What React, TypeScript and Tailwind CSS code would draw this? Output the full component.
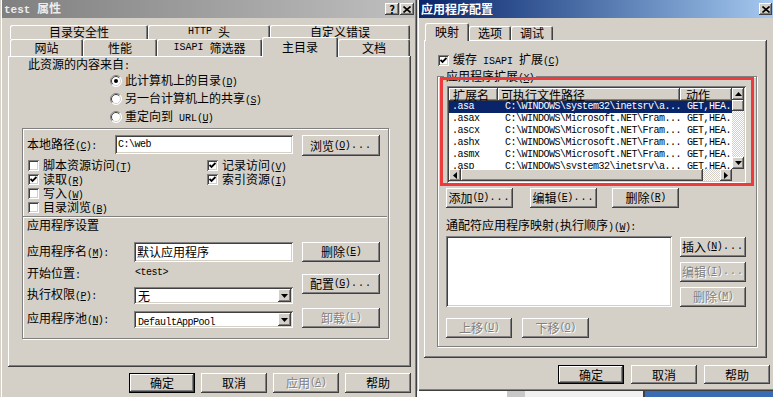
import React from "react";

const RAISED = "shadow-[inset_-1px_-1px_#404040,inset_1px_1px_#ffffff,inset_-2px_-2px_#808080,inset_2px_2px_#d4d0c8]";
const SUNKEN = "shadow-[inset_1px_1px_#808080,inset_-1px_-1px_#ffffff,inset_2px_2px_#404040,inset_-2px_-2px_#d4d0c8]";
const DEFBTN = "shadow-[inset_0_0_0_1px_#000000,inset_-2px_-2px_#404040,inset_2px_2px_#ffffff,inset_-3px_-3px_#808080]";
const TAB = "shadow-[inset_1px_1px_#ffffff,inset_-1px_0_#404040,inset_-2px_0_#808080]";
const ETCH = "border border-[#808080] shadow-[inset_1px_1px_#ffffff,1px_1px_#ffffff]";
const DIS = "text-[#808080] [text-shadow:1px_1px_0_#ffffff]";
const MONO = "font-['Liberation_Mono',monospace]";
const DITHER = "bg-[image:repeating-conic-gradient(#ffffff_0_25%,#d4d0c8_0_50%)] bg-[length:2px_2px]";

type C = { children?: React.ReactNode; c?: string };

const M = ({ children, c = "" }: C) => <span className={`${MONO} text-[10px] ${c}`}>{children}</span>;
const K = ({ k }: { k: string }) => (
  <span className={`${MONO} text-[10px] tracking-[-0.6px]`}>
    (<span className="underline underline-offset-[1px]">{k}</span>)
  </span>
);
const Dots = () => <span className={`${MONO} text-[10px] tracking-[1px] ml-[1px]`}>...</span>;

function Btn({ children, c = "", def = false, dis = false }: C & { def?: boolean; dis?: boolean }) {
  return (
    <div
      className={`flex flex-none items-center justify-center bg-[#d4d0c8] whitespace-nowrap ${def ? DEFBTN : RAISED} ${dis ? DIS : ""} ${c}`}
    >
      {children}
    </div>
  );
}

function Tab({ children, c = "" }: C) {
  return (
    <div className={`flex flex-none items-center justify-center bg-[#d4d0c8] rounded-t-[2px] whitespace-nowrap ${TAB} ${c}`}>
      {children}
    </div>
  );
}

function Check({ on }: { on?: boolean }) {
  return (
    <div className={`w-[11px] h-[11px] flex-none bg-white flex items-center justify-center ${SUNKEN}`}>
      {on && (
        <svg width="7" height="7" viewBox="0 0 7 7">
          <path d="M0.5 3 L2.5 5 L6.5 1" stroke="#000" strokeWidth="1.8" fill="none" />
        </svg>
      )}
    </div>
  );
}

function Radio({ on }: { on?: boolean }) {
  return (
    <svg width="12" height="12" viewBox="0 0 12 12" className="flex-none">
      <circle cx="6" cy="6" r="5.5" fill="#ffffff" />
      <path d="M9.9 2.1 A5.5 5.5 0 0 0 2.1 9.9" stroke="#808080" strokeWidth="1" fill="none" />
      <path d="M9.2 2.8 A4.5 4.5 0 0 0 2.8 9.2" stroke="#404040" strokeWidth="1" fill="none" />
      <path d="M2.1 9.9 A5.5 5.5 0 0 0 9.9 2.1" stroke="#ffffff" strokeWidth="1" fill="none" />
      <path d="M2.8 9.2 A4.5 4.5 0 0 0 9.2 2.8" stroke="#d4d0c8" strokeWidth="1" fill="none" />
      {on && <circle cx="6" cy="6" r="2" fill="#000" />}
    </svg>
  );
}

const Up = () => (
  <svg width="7" height="4" viewBox="0 0 7 4">
    <path d="M3.5 0 L7 4 L0 4 Z" fill="#000" />
  </svg>
);
const Down = () => (
  <svg width="7" height="4" viewBox="0 0 7 4">
    <path d="M0 0 L7 0 L3.5 4 Z" fill="#000" />
  </svg>
);
const Left = () => (
  <svg width="4" height="7" viewBox="0 0 4 7">
    <path d="M0 3.5 L4 0 L4 7 Z" fill="#000" />
  </svg>
);
const Right = () => (
  <svg width="4" height="7" viewBox="0 0 4 7">
    <path d="M0 0 L4 3.5 L0 7 Z" fill="#000" />
  </svg>
);
const XIcon = () => (
  <svg width="8" height="7" viewBox="0 0 8 7">
    <path d="M0.5 0.5 L7.5 6.5 M7.5 0.5 L0.5 6.5" stroke="#000" strokeWidth="1.6" />
  </svg>
);

function Select({ children, c = "" }: C) {
  return (
    <div className={`flex bg-white p-[2px] h-[17px] ${SUNKEN} ${c}`}>
      <div className="flex-1 flex items-center pl-[2px] whitespace-nowrap">
        <span className="inline-block h-[13px] leading-[13px]">{children}</span>
      </div>
      <div className={`w-[13px] h-[13px] bg-[#d4d0c8] flex items-center justify-center ${RAISED}`}>
        <Down />
      </div>
    </div>
  );
}

function CRow({ on, children }: { on?: boolean; children?: React.ReactNode }) {
  return (
    <div className="h-[14px] flex items-center gap-[4px] whitespace-nowrap">
      <Check on={on} />
      <span className="inline-block h-[14px] leading-[14px]">{children}</span>
    </div>
  );
}

function LeftDialog() {
  return (
    <div className="w-[417px] h-[397px] flex-none flex flex-col px-[2px] bg-[#d4d0c8] shadow-[inset_-1px_0_#404040,inset_-2px_0_#808080,inset_1px_0_#d4d0c8,inset_2px_0_#ffffff]">
      <div className="h-[18px] flex-none flex items-center pl-[2px] pr-[1px] bg-gradient-to-r from-[#808080] to-[#c0c0c0]">
        <span className="font-bold text-[#ececec] leading-[14px] whitespace-nowrap">
          <span className={`${MONO} text-[11px]`}>test&nbsp;</span>属性
        </span>
        <div className="ml-auto flex">
          <Btn c="w-[14px] h-[12px] mr-[1px] font-bold text-[11px] leading-[10px]">?</Btn>
          <Btn c="w-[14px] h-[12px]">
            <XIcon />
          </Btn>
        </div>
      </div>

      <div className="ml-[6px] mt-[7px] w-[403px] flex flex-col">
        <div className="flex h-[14px] pl-[2px] leading-[14px]">
          <Tab c="w-[138px] h-[14px]">目录安全性</Tab>
          <Tab c="w-[122px] h-[14px]">
            <M>HTTP&nbsp;</M>头
          </Tab>
          <Tab c="w-[140px] h-[14px]">自定义错误</Tab>
        </div>
        <div className="flex h-[17px] pl-[2px] items-end leading-[14px]">
          <Tab c="w-[73px] h-[17px]">网站</Tab>
          <Tab c="w-[74px] h-[17px]">性能</Tab>
          <Tab c="w-[105px] h-[17px]">
            <M>ISAPI&nbsp;</M>筛选器
          </Tab>
          <Tab c="w-[76px] h-[20px] -mb-[1px] relative z-10">主目录</Tab>
          <Tab c="w-[72px] h-[17px]">文档</Tab>
        </div>

        <div className={`h-[311px] flex flex-col bg-[#d4d0c8] ${RAISED}`}>
          <div className="mt-[1px] pl-[20px] h-[14px]">
            此资源的内容来自<M>:</M>
          </div>
          <div className="mt-[1px] pl-[102px] flex flex-col">
            <div className="h-[18px] flex items-center gap-[3px]">
              <Radio on />
              <span>
                此计算机上的目录<K k="D" />
              </span>
            </div>
            <div className="h-[18px] flex items-center gap-[3px]">
              <Radio />
              <span>
                另一台计算机上的共享<K k="S" />
              </span>
            </div>
            <div className="h-[18px] flex items-center gap-[3px]">
              <Radio />
              <span>
                重定向到<M>&nbsp;URL</M>
                <K k="U" />
              </span>
            </div>
          </div>

          <div className={`mt-[2px] ml-[14px] w-[367px] h-[211px] flex flex-col pl-[4px] pt-[6px] ${ETCH}`}>
            <div className="flex items-start h-[21px]">
              <div className="w-[88px] leading-[18px] whitespace-nowrap">
                本地路径<K k="C" />
                <M>:</M>
              </div>
              <div className={`w-[178px] h-[19px] bg-white flex items-center pl-[3px] ${SUNKEN}`}>
                <M c="tracking-[-0.5px]">C:\web</M>
              </div>
              <Btn c="ml-[9px] w-[78px] h-[21px]">
                浏览<K k="O" />
                <Dots />
              </Btn>
            </div>
            <div className="mt-[2px] flex pl-[1px]">
              <div className="w-[179px] flex flex-col">
                <CRow>
                  脚本资源访问<K k="T" />
                </CRow>
                <CRow on>
                  读取<K k="R" />
                </CRow>
                <CRow>
                  写入<K k="W" />
                </CRow>
                <CRow>
                  目录浏览<K k="B" />
                </CRow>
              </div>
              <div className="flex flex-col">
                <CRow on>
                  记录访问<K k="V" />
                </CRow>
                <CRow on>
                  索引资源<K k="I" />
                </CRow>
              </div>
            </div>
            <div className="mt-[2px] -ml-[4px] w-[364px] h-[2px] border-t border-b border-t-[#808080] border-b-[#ffffff]" />
            <div className="h-[14px]">应用程序设置</div>
            <div className="flex">
              <div className="w-[275px] flex flex-col">
                <div className="mt-[10px] flex items-start h-[20px]">
                  <div className="w-[107px] leading-[18px] whitespace-nowrap">
                    应用程序名<K k="M" />
                    <M>:</M>
                  </div>
                  <div className={`w-[159px] h-[20px] bg-white flex items-center pl-[3px] ${SUNKEN}`}>默认应用程序</div>
                </div>
                <div className="mt-[4px] h-[14px] flex">
                  <div className="w-[108px]">
                    开始位置<M>:</M>
                  </div>
                  <M c="tracking-[-0.5px] leading-[14px]">&lt;test&gt;</M>
                </div>
                <div className="mt-[7px] h-[17px] flex items-center">
                  <div className="w-[107px] whitespace-nowrap">
                    执行权限<K k="P" />
                    <M>:</M>
                  </div>
                  <Select c="w-[159px]">无</Select>
                </div>
                <div className="mt-[7px] h-[17px] flex items-center">
                  <div className="w-[107px] whitespace-nowrap">
                    应用程序池<K k="N" />
                    <M>:</M>
                  </div>
                  <Select c="w-[159px]">
                    <M c="tracking-[-0.5px]">DefaultAppPool</M>
                  </Select>
                </div>
              </div>
              <div className="flex flex-col">
                <Btn c="mt-[10px] w-[78px] h-[20px]">
                  删除<K k="E" />
                </Btn>
                <Btn c="mt-[12px] w-[78px] h-[20px]">
                  配置<K k="G" />
                  <Dots />
                </Btn>
                <Btn dis c="mt-[14px] w-[78px] h-[20px]">
                  卸载<K k="L" />
                </Btn>
              </div>
            </div>
          </div>
        </div>
      </div>

      <div className="mt-[6px] flex justify-end pr-[4px] gap-[6px]">
        <Btn def c="w-[66px] h-[20px]">确定</Btn>
        <Btn c="w-[66px] h-[20px]">取消</Btn>
        <Btn dis c="w-[66px] h-[20px]">
          应用<K k="A" />
        </Btn>
        <Btn c="w-[66px] h-[20px]">帮助</Btn>
      </div>
    </div>
  );
}

const ROWS: [string, string][] = [
  [".asa", "C:\\WINDOWS\\system32\\inetsrv\\a..."],
  [".asax", "C:\\WINDOWS\\Microsoft.NET\\Fram..."],
  [".ascx", "C:\\WINDOWS\\Microsoft.NET\\Fram..."],
  [".ashx", "C:\\WINDOWS\\Microsoft.NET\\Fram..."],
  [".asmx", "C:\\WINDOWS\\Microsoft.NET\\Fram..."],
  [".asp", "C:\\WINDOWS\\system32\\inetsrv\\a..."],
];

function ListView() {
  return (
    <div className={`mt-[3px] ml-[9px] w-[299px] h-[97px] flex-none bg-white p-[2px] flex flex-col ${SUNKEN}`}>
      <div className="flex h-[81px]">
        <div className="w-[283px] flex flex-col overflow-hidden">
          <div className="flex h-[13px] flex-none whitespace-nowrap">
            <div className={`w-[49px] pl-[4px] bg-[#d4d0c8] ${RAISED}`}>
              <span className="inline-block h-[13px] leading-[13px]">扩展名</span>
            </div>
            <div className={`w-[182px] pl-[3px] bg-[#d4d0c8] ${RAISED}`}>
              <span className="inline-block h-[13px] leading-[13px]">可执行文件路径</span>
            </div>
            <div className={`w-[52px] pl-[6px] bg-[#d4d0c8] ${RAISED}`}>
              <span className="inline-block h-[13px] leading-[13px]">动作</span>
            </div>
          </div>
          {ROWS.map(([e, p], i) => (
            <div
              key={i}
              className={`flex flex-none h-[12px] leading-[12px] ${MONO} text-[10px] tracking-[-0.5px] whitespace-nowrap ${
                i === 0 ? "bg-[#0a246a] text-white" : ""
              }`}
            >
              <div className="w-[49px] pl-[3px]">{e}</div>
              <div className="w-[182px] pl-[7px] overflow-hidden">{p}</div>
              <div className="w-[52px] pl-[7px] overflow-hidden">GET,HEA...</div>
            </div>
          ))}
        </div>
        <div className="w-[12px] flex flex-col">
          <Btn c="w-[12px] h-[12px]">
            <Up />
          </Btn>
          <Btn c="w-[12px] h-[11px]" />
          <div className={`flex-1 ${DITHER}`} />
          <Btn c="w-[12px] h-[12px]">
            <Down />
          </Btn>
        </div>
      </div>
      <div className="flex h-[12px]">
        <Btn c="w-[12px] h-[12px]">
          <Left />
        </Btn>
        <Btn c="w-[242px] h-[12px]" />
        <div className={`w-[17px] ${DITHER}`} />
        <Btn c="w-[12px] h-[12px]">
          <Right />
        </Btn>
        <div className="w-[12px] bg-[#d4d0c8]" />
      </div>
    </div>
  );
}

function RightSide() {
  return (
    <div className="w-[360px] flex-none flex flex-col">
      <div className="h-[391px] flex-none flex flex-col px-[2px] bg-[#d4d0c8] shadow-[inset_1px_0_#d4d0c8,inset_2px_0_#ffffff,inset_0_-1px_#404040,inset_0_-2px_#808080]">
        <div className="h-[18px] flex-none flex items-center pl-[2px] pr-[3px] bg-gradient-to-r from-[#0a246a] to-[#a6caf0]">
          <span className="font-bold text-white leading-[14px] whitespace-nowrap">应用程序配置</span>
          <Btn c="ml-auto w-[13px] h-[12px]">
            <XIcon />
          </Btn>
        </div>

        <div className="mt-[4px] h-[18px] flex items-end pl-[6px] leading-[14px]">
          <Tab c="w-[44px] h-[18px] -mb-[1px] relative z-10">映射</Tab>
          <Tab c="w-[42px] h-[14px]">选项</Tab>
          <Tab c="w-[42px] h-[14px]">调试</Tab>
        </div>

        <div className={`ml-[5px] w-[343px] h-[318px] flex flex-col bg-[#d4d0c8] ${RAISED}`}>
          <div className="mt-[13px] pl-[14px] h-[14px] flex items-center gap-[4px] whitespace-nowrap">
            <Check on />
            <span>
              缓存<M>&nbsp;ISAPI&nbsp;</M>扩展<K k="C" />
            </span>
          </div>
          <div className={`relative mt-[9px] ml-[13px] w-[320px] h-[271px] flex flex-col ${ETCH}`}>
            <div className="-mt-[8px] h-[14px] flex">
              <span className="ml-[6px] px-[2px] bg-[#d4d0c8] whitespace-nowrap">
                应用程序扩展<K k="X" />
              </span>
            </div>
            <ListView />
            <div className="mt-[5px] ml-[8px] flex">
              <Btn c="w-[67px] h-[20px]">
                添加<K k="D" />
                <Dots />
              </Btn>
              <Btn c="ml-[17px] w-[67px] h-[20px]">
                编辑<K k="E" />
                <Dots />
              </Btn>
              <Btn c="ml-[15px] w-[67px] h-[20px]">
                删除<K k="R" />
              </Btn>
            </div>
            <div className="mt-[10px] ml-[8px] h-[14px] whitespace-nowrap">
              通配符应用程序映射<M>(</M>执行顺序<M>)</M>
              <K k="W" />
              <M>:</M>
            </div>
            <div className="mt-[4px] ml-[8px] flex">
              <div className={`w-[226px] h-[71px] bg-white ${SUNKEN}`} />
              <div className="ml-[8px] mt-[1px] flex flex-col gap-[5px]">
                <Btn c="w-[66px] h-[20px]">
                  插入<K k="N" />
                  <Dots />
                </Btn>
                <Btn dis c="w-[66px] h-[20px]">
                  编辑<K k="I" />
                  <Dots />
                </Btn>
                <Btn dis c="w-[66px] h-[20px]">
                  删除<K k="M" />
                </Btn>
              </div>
            </div>
            <div className="mt-[11px] ml-[8px] flex">
              <Btn dis c="w-[66px] h-[20px]">
                上移<K k="U" />
              </Btn>
              <Btn dis c="ml-[10px] w-[67px] h-[20px]">
                下移<K k="O" />
              </Btn>
            </div>
            <div className="absolute left-[2px] top-0 w-[314px] h-[109px] border-[3px] border-[#ee3a3a] z-20 pointer-events-none" />
          </div>
        </div>

        <div className="mt-[7px] flex pl-[139px] gap-[7px]">
          <Btn def c="w-[66px] h-[19px]">确定</Btn>
          <Btn c="w-[66px] h-[19px]">取消</Btn>
          <Btn c="w-[66px] h-[19px]">帮助</Btn>
        </div>
      </div>
      <div className="h-[6px] flex">
        <div className="w-[90px] bg-white" />
        <div className="w-[18px] bg-[#c8c8c8]" />
        <div className="w-[118px] bg-[#f0f0f0]" />
        <div className="w-[2px] bg-[#404040]" />
        <div className="flex-1 bg-[#3a6cb4]" />
      </div>
    </div>
  );
}

export default function App() {
  return (
    <div className="w-[773px] h-[397px] overflow-hidden flex bg-[#d4d0c8] text-black text-[12px] leading-[14px] font-['Noto_Sans_CJK_SC',sans-serif]">
      <LeftDialog />
      <RightSide />
    </div>
  );
}
